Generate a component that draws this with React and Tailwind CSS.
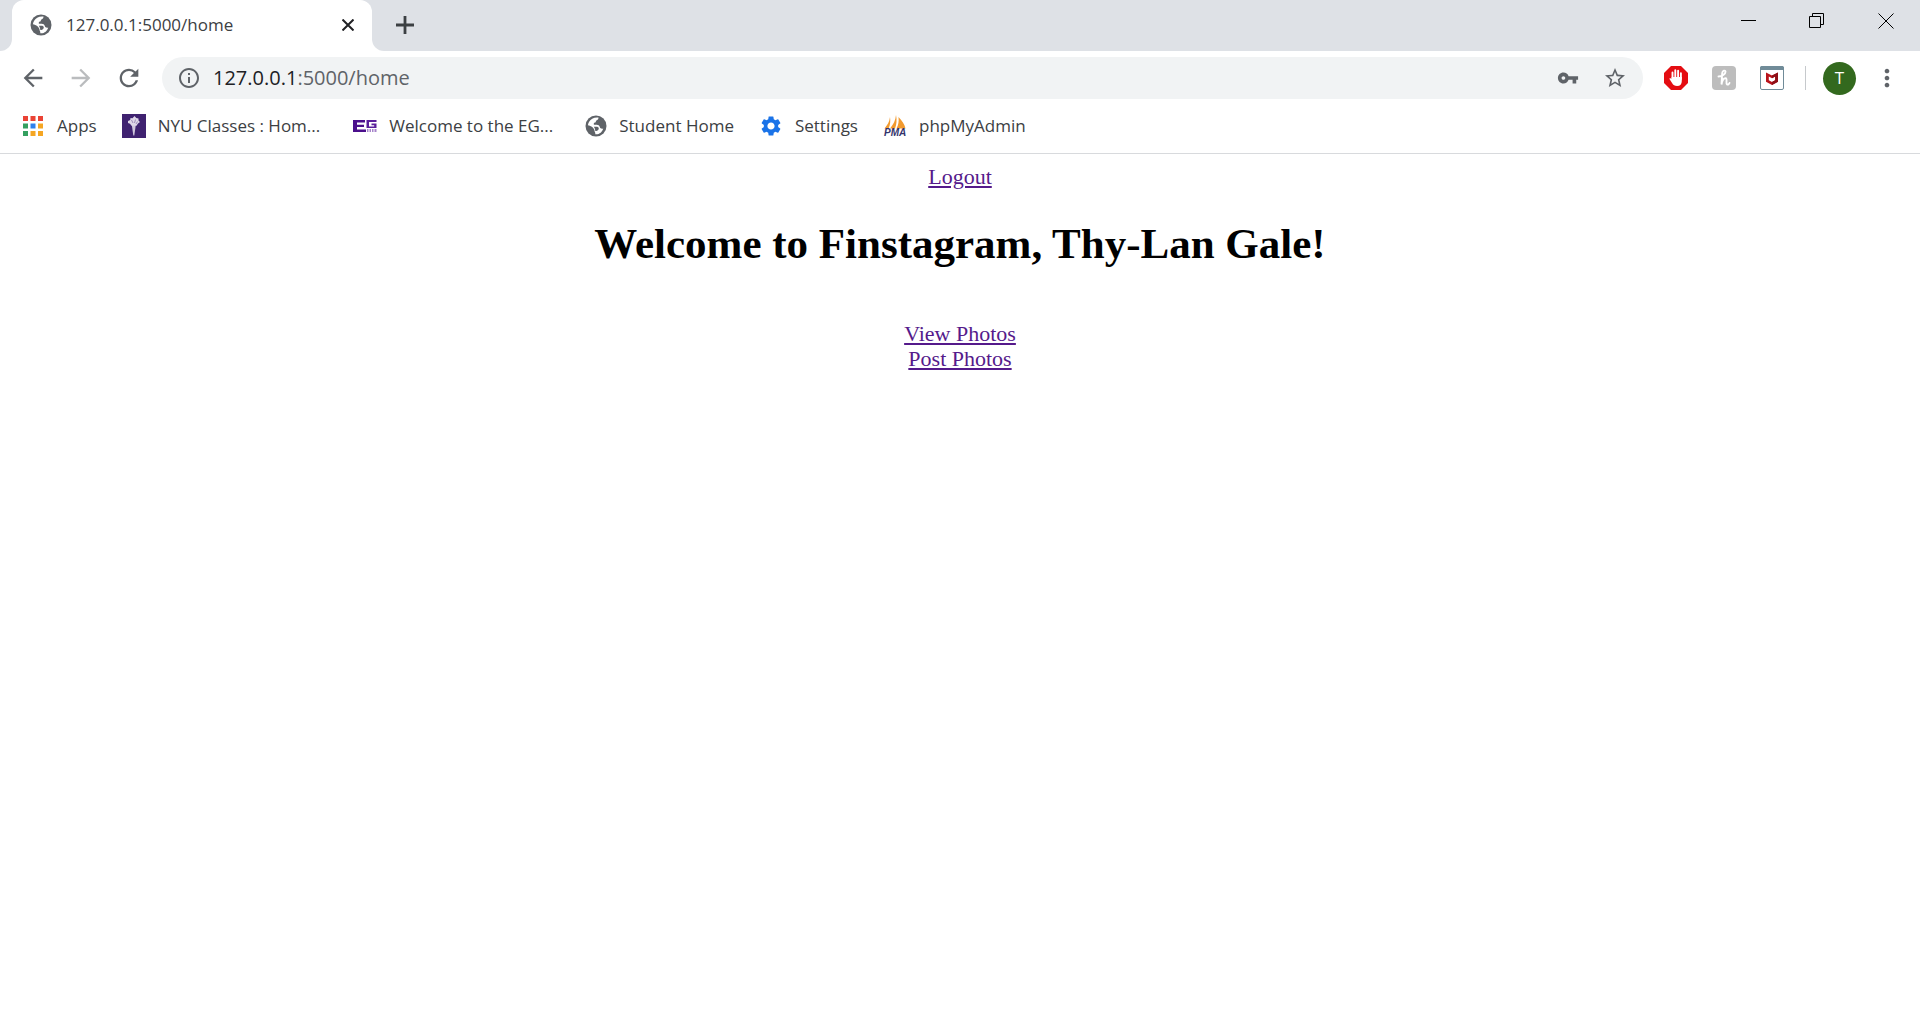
import React from "react";
import { MdVpnKey, MdStarBorder, MdSettings, MdArrowBack, MdArrowForward, MdRefresh, MdInfoOutline, MdMoreVert } from "react-icons/md";

function Globe() {
  return (
    <svg viewBox="0 0 22 22" className="size-[22px] shrink-0" aria-hidden="true">
      <circle cx="11" cy="11" r="10.5" fill="#5f6368" />
      <path
        d="M13.500 2.600C9.500 2 5.500 4 4 7c-.6 1-.9 2-1.100 3.200 1.500.3 3.200.7 4.600 2 1.300 1.200 2 2.500 2.200 4.500.6.700.6 1.500.6 2.600 4 .4 7-2.300 7.900-5.800-1.700.6-3-.2-3.400-1.400-.4-1.500-1.500-2.300-3.100-2.300H8.900c-.5-1.500.3-2.500 1.900-2.600C10.600 5 13.500 5.500 13.500 2.600z"
        fill="#fff"
      />
      <path d="M8.800 11.800h3.500c1.300.3 1.900 1.500 1.200 2.700-.8 1-1.800 1.600-3.200 1.600-.2-1.700-.5-3-1.500-4.300z" fill="#5f6368" />
    </svg>
  );
}

function AppsGrid() {
  const colors = ["#ea4335", "#ea4335", "#ea4335", "#34a060", "#2f80ed", "#f5a623", "#34a060", "#f5a623", "#f5a623"];
  return (
    <svg viewBox="0 0 20 20" className="size-5 shrink-0" aria-hidden="true">
      {colors.map((c, i) => (
        <rect key={i} x={(i % 3) * 7.5} y={Math.floor(i / 3) * 7.5} width="5" height="5" fill={c} />
      ))}
    </svg>
  );
}

function Torch() {
  return (
    <svg viewBox="0 0 24 24" className="size-6 shrink-0" aria-hidden="true">
      <rect width="24" height="24" fill="#3f2270" />
      <path d="M9.800 11h4l-1.500 10.500h-1z" fill="#cfc6dc" />
      <path d="M6 7l2.200-1 .3-2 2 .2L12.500 2l1.800 2 2.200.5v2l1.500 1.500-2 1.500-1.500 2.200h-5L8 9.800 6 9z" fill="#ded6e8" />
      <path d="M9.500 6l1.500 3M13.500 5.500L12.500 9M15.500 7.500L14 10" stroke="#8d78ab" strokeWidth=".8" />
    </svg>
  );
}

function EgLogo() {
  return (
    <svg viewBox="0 0 24 24" className="size-6 shrink-0" aria-hidden="true">
      <path d="M0 6h12v2.500H4v2.300h7v2.300H4v2.400h9V18H0z" fill="#4b0f8c" />
      <path d="M13.500 6h10v2H16v4.500h5.200v-1.300h-2.700V9.500h5V14h-10z" fill="#5a1f9b" />
      <path d="M14 15h1.500v3H14zM16.500 15h1.500v3h-1.500zM19 15h1.500v3H19zM21.500 15h2v3h-2z" fill="#a684ca" />
    </svg>
  );
}

function Sails() {
  return (
    <svg viewBox="0 0 24 24" className="size-6 shrink-0" aria-hidden="true">
      <path d="M7 3c.6 4 .3 8-1.500 11.500h-4C4.500 11 6.500 7.500 7 3zM13 1c1 5 .7 9-1 13.500H7C10.500 10 12.500 6.500 13 1zM15.500 3c3.500 3.500 6 7 7 11.500h-9c2-4 2.500-7 2-11.500z" fill="#f29a2e" />
      <text x="1" y="22" fontSize="10" fontWeight="700" fontStyle="italic" fontFamily="Liberation Sans, sans-serif" fill="#33336b">PMA</text>
    </svg>
  );
}

function Hand() {
  return (
    <svg viewBox="0 0 24 24" className="size-6" aria-hidden="true">
      <path d="M7 0h10l7 7v10l-7 7H7l-7-7V7z" fill="#e40d12" />
      <path d="M8.500 13V6.500M11.300 12V4.300M14.100 12V4.800M16.900 13V7.200" stroke="#fff" strokeWidth="1.900" strokeLinecap="round" />
      <path d="M7.600 11h10.200v4c0 3-1.500 5-4.700 5-2.500 0-3.900-1-4.900-2.800l-2.900-4.400c.9-.9 1.800-.5 2.300.2z" fill="#fff" />
    </svg>
  );
}

function Honey() {
  return (
    <svg viewBox="0 0 24 24" className="size-6" aria-hidden="true">
      <rect width="24" height="24" rx="4" fill="#bdbdbd" />
      <path d="M6.500 10.500c3.500 0 7-2.500 7-4.800 0-2-3-1.200-3.300 1.500L9.500 18.500c.6-4 2.300-6.500 4.200-6.300 2 .3-.2 5.300 1.300 6.200 1 .5 2-.2 2.500-1.400" fill="none" stroke="#fff" strokeWidth="1.900" strokeLinecap="round" />
    </svg>
  );
}

function Shield() {
  return (
    <svg viewBox="0 0 24 24" className="size-6" aria-hidden="true">
      <rect x=".5" y=".5" width="23" height="23" rx="1.500" fill="#fff" stroke="#708b98" />
      <path d="M0 2a2 2 0 012-2h20a2 2 0 012 2v2H0z" fill="#708b98" />
      <path d="M6 6.500l6 3 6-3v9.300L12 19l-6-3.200zM8.800 10.500v3.800L12 16l3.200-1.700v-3.800L12 12.200z" fill="#b8131b" fillRule="evenodd" />
      <path d="M12 9.500l6-3v9.300L12 19v-3l3.200-1.700v-3.800L12 12.200z" fill="#8f1017" />
    </svg>
  );
}

const bookmarks = [
  { label: "Apps", icon: <AppsGrid />, box: "gap-[14px] mr-[25px]" },
  { label: "NYU Classes : Hom...", icon: <Torch />, box: "gap-3 mr-[33px]" },
  { label: "Welcome to the EG...", icon: <EgLogo />, box: "gap-3 mr-8" },
  { label: "Student Home", icon: <Globe />, box: "gap-3 mr-[25px]" },
  { label: "Settings", icon: <MdSettings className="size-6 shrink-0 text-[#1a73e8]" />, box: "gap-3 mr-[25px]" },
  { label: "phpMyAdmin", icon: <Sails />, box: "gap-3" },
];

export default function App() {
  return (
    <div className="min-h-screen bg-white font-['Open_Sans',sans-serif] text-[#3c4043]">
      <header className="border-b border-[#d8dadd]">
        <div className="flex h-[51px] bg-[#dee1e6]">
          <div className="flex w-3 items-end bg-white">
            <div className="h-full w-full rounded-br-[12px] bg-[#dee1e6]" />
          </div>
          <div className="bg-[#dee1e6]">
            <div className="flex h-full w-[360px] items-center rounded-t-[12px] bg-white px-[18px] pb-px">
              <Globe />
              <span className="ml-[14px] flex-1 text-[17px]">127.0.0.1:5000/home</span>
              <button aria-label="Close tab" className="text-[#202124]">
                <svg viewBox="0 0 12 12" className="size-3" fill="none" stroke="currentColor" strokeWidth="2"><path d="M.5.5l11 11M11.500.5l-11 11" /></svg>
              </button>
            </div>
          </div>
          <div className="w-3 bg-white">
            <div className="h-full rounded-bl-[12px] bg-[#dee1e6]" />
          </div>
          <button aria-label="New tab" className="ml-3 self-center pb-px text-[#3c4043]">
            <svg viewBox="0 0 18 18" className="size-[18px]" fill="none" stroke="currentColor" strokeWidth="2.800"><path d="M9 0v18M0 9h18" /></svg>
          </button>
          <div className="flex-1" />
          <div className="flex h-[42px] items-center gap-[53px] pr-[26px] text-black">
            <button aria-label="Minimize">
              <svg viewBox="0 0 16 16" className="size-4" stroke="currentColor"><path d="M1 7.500h15" /></svg>
            </button>
            <button aria-label="Restore">
              <svg viewBox="0 0 16 16" className="size-4" fill="none" stroke="currentColor"><path d="M.5 3.500h11v11H.5zM3.500 3.500v-3h11v11h-3" /></svg>
            </button>
            <button aria-label="Close">
              <svg viewBox="0 0 16 16" className="size-4" stroke="currentColor"><path d="M.5.5l15 15M15.500.5l-15 15" /></svg>
            </button>
          </div>
        </div>

        <div className="flex h-[54px] items-center pr-[19px] pl-[19px] text-[#5f6368]">
          <button aria-label="Back"><MdArrowBack className="size-7" /></button>
          <button aria-label="Forward" className="ml-5 text-[#babcbe]"><MdArrowForward className="size-7" /></button>
          <button aria-label="Reload" className="ml-5"><MdRefresh className="size-7" /></button>
          <div className="ml-[19px] flex h-[42px] flex-1 items-center rounded-full bg-[#f1f3f4] pr-4 pl-[15px]">
            <MdInfoOutline className="size-6" />
            <button className="ml-3 flex-1 text-left text-xl leading-6">
              <span className="text-[#202124]">127.0.0.1</span>:5000/home
            </button>
            <button aria-label="Saved passwords"><MdVpnKey className="size-[22px]" /></button>
            <button aria-label="Bookmark this page" className="ml-6"><MdStarBorder className="size-6" /></button>
          </div>
          <button aria-label="Ad blocker" className="ml-[21px]"><Hand /></button>
          <button aria-label="Coupons" className="ml-6"><Honey /></button>
          <button aria-label="Web advisor" className="ml-6"><Shield /></button>
          <div className="ml-[21px] h-6 w-px bg-[#c6c9cc]" />
          <button aria-label="Profile" className="ml-[17px] flex size-[33px] items-center justify-center rounded-full bg-[#33691e] text-[17px] text-white">T</button>
          <button aria-label="Menu" className="ml-[17px]"><MdMoreVert className="size-7" /></button>
        </div>

        <nav className="flex h-12 items-center pb-1.5 pl-[23px] text-[17px]">
          {bookmarks.map((b) => (
            <a key={b.label} href="#" className={`flex items-center whitespace-nowrap ${b.box}`}>
              {b.icon}
              {b.label}
            </a>
          ))}
        </nav>
      </header>

      <main className="flex flex-col items-center pt-2.5 font-['Liberation_Serif',serif] text-[22px] leading-[25px] text-[#551a8b]">
        <a href="#" className="underline">Logout</a>
        <h1 className="my-[30px] text-[43px] leading-[50px] font-bold text-black">Welcome to Finstagram, Thy-Lan Gale!</h1>
        <a href="#" className="mt-[22px] underline">View Photos</a>
        <a href="#" className="underline">Post Photos</a>
      </main>
    </div>
  );
}
